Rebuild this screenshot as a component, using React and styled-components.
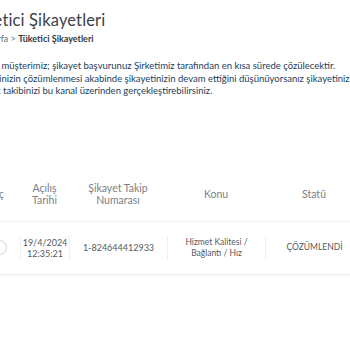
import React from "react";
import styled, { createGlobalStyle } from "styled-components";

const Global = createGlobalStyle`
  html, body { margin: 0; padding: 0; background: #ffffff; overflow: hidden; }
  body { font-family: "Lato", "Noto Sans", sans-serif; }
`;

const Viewport = styled.div`
  width: 350px;
  height: 350px;
  overflow: hidden;
`;

const Page = styled.div`
  margin-left: -31px;
  width: 420px;
  padding-top: 8px;
`;

const Title = styled.h1`
  margin: 0 0 0 -1px;
  font-size: 16.5px;
  font-weight: 400;
  color: #3d4247;
  line-height: 24px;
  letter-spacing: 0.15px;
  white-space: nowrap;
`;

const Breadcrumb = styled.div`
  margin-top: 0;
  font-size: 9px;
  color: #6d7278;
  line-height: 14px;
  white-space: nowrap;
  b { color: #33383d; font-weight: 700; }
`;

const Intro = styled.p`
  margin: 14px 0 0;
  font-size: 9.5px;
  line-height: 12.5px;
  color: #233d5c;
  white-space: nowrap;
`;

const Table = styled.table`
  margin-top: 70px;
  margin-left: 9px;
  width: 385px;
  border-collapse: collapse;
  table-layout: fixed;
  box-shadow: 0 3px 4px -2px rgba(0, 0, 0, 0.04);
`;

const Th = styled.th`
  height: 53px;
  padding: 0 ${(p) => (p.$shift ? `${p.$shift}px` : "0")} 0 0;
  font-size: 10.5px;
  font-weight: 400;
  line-height: 12.5px;
  color: #7b8087;
  text-align: center;
  vertical-align: middle;
  border-bottom: 1px solid #eeeff1;
`;

const Td = styled.td`
  padding: 14px 0;
  text-align: center;
  vertical-align: middle;
  border-bottom: 1px solid #eeeff1;
`;

const CellInner = styled.div`
  min-height: 24px;
  display: flex;
  align-items: center;
  justify-content: center;
  border-left: ${(p) => (p.$sep ? "1px solid #eeeff1" : "none")};
  font-size: ${(p) => p.$size || 9}px;
  line-height: 11px;
  color: #55595e;
`;

const Radio = styled.span`
  display: inline-block;
  width: 13px;
  height: 13px;
  border: 1px solid #d4d6d9;
  border-radius: 50%;
  background: #fff;
`;

export default function App() {
  const cols = [42, 49, 98, 98, 98];
  return (
    <Viewport>
      <Global />
      <Page>
        <Title>Tüketici Şikayetleri</Title>
        <Breadcrumb>
          Ana Sayfa &gt; <b>Tüketici Şikayetleri</b>
        </Breadcrumb>
        <Intro>
          Değerli müşterimiz; şikayet başvurunuz Şirketimiz tarafından en kısa sürede çözülecektir.
          <br />
          Şikayetinizin çözümlenmesi akabinde şikayetinizin devam ettiğini düşünüyorsanız şikayetinizin
          <br />
          ve anlık takibinizi bu kanal üzerinden gerçekleştirebilirsiniz.
        </Intro>
        <Table>
          <colgroup>
            {cols.map((w, i) => (
              <col key={i} style={{ width: w }} />
            ))}
          </colgroup>
          <thead>
            <tr>
              <Th $shift={6}>Seç</Th>
              <Th>
                Açılış
                <br />
                Tarihi
              </Th>
              <Th>
                Şikayet Takip
                <br />
                Numarası
              </Th>
              <Th>Konu</Th>
              <Th>Statü</Th>
            </tr>
          </thead>
          <tbody>
            <tr>
              <Td>
                <CellInner>
                  <Radio />
                </CellInner>
              </Td>
              <Td>
                <CellInner $sep>
                  19/4/2024
                  <br />
                  12:35:21
                </CellInner>
              </Td>
              <Td>
                <CellInner $sep $size={9}>1-824644412933</CellInner>
              </Td>
              <Td>
                <CellInner $sep $size={8.5}>
                  Hizmet Kalitesi /
                  <br />
                  Bağlantı / Hız
                </CellInner>
              </Td>
              <Td>
                <CellInner $sep $size={8.5}>ÇÖZÜMLENDİ</CellInner>
              </Td>
            </tr>
          </tbody>
        </Table>
      </Page>
    </Viewport>
  );
}
